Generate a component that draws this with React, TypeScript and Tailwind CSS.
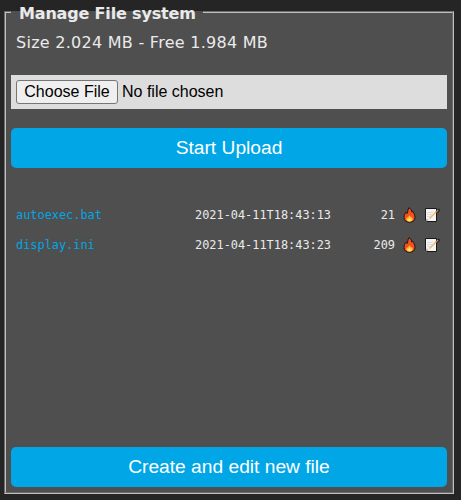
const files = [
  { name: 'autoexec.bat', date: '2021-04-11T18:43:13', size: '21' },
  { name: 'display.ini', date: '2021-04-11T18:43:23', size: '209' },
];

function FireIcon() {
  return (
    <svg className="block h-4 w-[13px]" viewBox="0 0 13 16">
      <path
        d="M6 .7C8.400 2 8.500 3.700 8.900 5.200L9.700 4.200C10.700 5.700 12 8 12 10.500C12 13.600 9.600 15.300 6.500 15.300C3.400 15.300 1 13.500 1 10.500C1 8 2 6.500 3 5.200L4 6.500C5.200 5 4.500 2.300 6 .7Z"
        fill="#f7501c"
        stroke="#1b1512"
        strokeWidth="1"
        strokeLinejoin="round"
      />
      <path d="M6.500 8.400C7.400 9 7.700 10 7.900 10.800L9 10C10.500 12.500 9.200 14.600 6.500 14.600C3.700 14.600 2.700 12.500 4 10.200L5.100 11C5.600 10 5.400 9.200 6.500 8.400Z" fill="#ffc83d" />
      <path d="M6.500 11.500C7.800 12.500 8 14.300 6.500 14.300C5 14.300 5 12.500 6.500 11.500Z" fill="#fff08a" />
    </svg>
  );
}

function EditIcon() {
  return (
    <svg className="block h-4 w-4" viewBox="0 0 16 16">
      <path d="M1.500 1.500H12.500V14.500H3L1.500 13Z" fill="#f4f4f4" stroke="#171717" strokeWidth="1" strokeLinejoin="round" />
      <path d="M3 5.500H9M3 7.500H8M3 9.500H6" stroke="#dcdcdc" strokeWidth="1" />
      <path d="M2 11.800H4.200V14H3.200L2 12.800Z" fill="#c4c7cb" />
      <path d="M13 4.700L14.500 3.200" stroke="#1c1a1a" strokeWidth="2.600" strokeLinecap="round" />
      <path d="M5.500 11.500L12.500 4.500" stroke="#efb765" strokeWidth="1.500" />
      <path d="M12.500 4.500L14.300 2.900" stroke="#c9877a" strokeWidth="1.300" />
    </svg>
  );
}

export default function App() {
  return (
    <div className="h-[500px] w-[461px] overflow-hidden bg-[#252525] pl-1 pt-[3px] font-['DejaVu_Sans',Verdana,sans-serif] text-[#eaeaea]">
      <fieldset className="h-[491px] w-[450px] border-2 border-[#c0c0c0] [border-style:groove] bg-[#4f4f4f] px-[5px]">
        <legend className="h-[18px] w-[192px] whitespace-nowrap px-2 text-[16px] font-bold leading-[22px] tracking-[-0.170px]">
          Manage File system
        </legend>
        <div className="mt-3 h-5 whitespace-nowrap pl-[5px] text-[16px] leading-5 tracking-[0.270px]">Size 2.024 MB - Free 1.984 MB</div>
        <div className="mt-[22px] flex h-[34px] items-center bg-[#ddd] pl-[5px] font-['Liberation_Sans',Arial,sans-serif] text-[16px] text-black">
          <button className="h-6 w-[102px] whitespace-nowrap rounded-[3px] border border-[#767676] bg-[#efefef] leading-[20px]">Choose File</button>
          <span className="ml-1">No file chosen</span>
        </div>
        <button className="mt-[19px] block h-10 w-full rounded-[5px] bg-[#00a6e6] font-['Liberation_Sans',Arial,sans-serif] text-[19.200px] leading-10 text-white">
          Start Upload
        </button>
        <div className="mt-8 h-[247px] pl-[5px] font-['DejaVu_Sans_Mono',monospace] text-[11.900px]">
          {files.map((file) => (
            <div key={file.name} className="flex h-[30px] items-center">
              <a className="w-[179px] pt-[2px] text-[#00a6e6]">{file.name}</a>
              <span className="w-[137px] pt-[2px]">{file.date}</span>
              <span className="w-[63px] pt-[2px] text-right">{file.size}</span>
              <span className="ml-2"><FireIcon /></span>
              <span className="ml-2"><EditIcon /></span>
            </div>
          ))}
        </div>
        <button className="block h-10 w-full rounded-[5px] bg-[#00a6e6] font-['Liberation_Sans',Arial,sans-serif] text-[19.200px] leading-10 text-white">
          Create and edit new file
        </button>
      </fieldset>
    </div>
  );
}
